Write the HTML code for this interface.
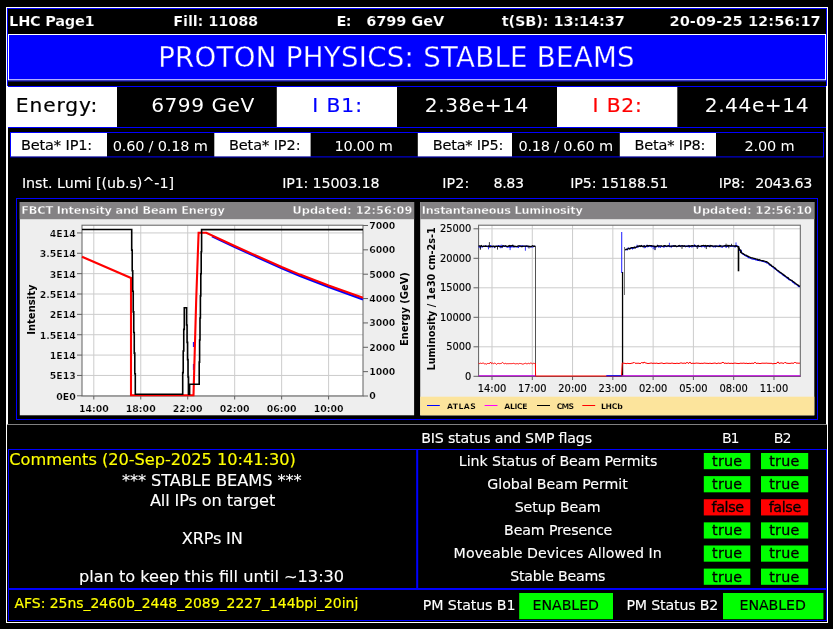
<!DOCTYPE html>
<html><head><meta charset="utf-8"><title>LHC Page1</title>
<style>
html,body{margin:0;padding:0;background:#000;overflow:hidden}
svg{display:block;will-change:transform;font-family:"DejaVu Sans","Liberation Sans",sans-serif}
</style></head><body>
<svg width="833" height="629" viewBox="0 0 833 629">
<rect width="833" height="629" fill="#000"/>
<rect x="6.00" y="7.00" width="1.00" height="616.00" fill="#fff" />
<rect x="827.00" y="7.00" width="1.00" height="616.00" fill="#fff" />
<rect x="6.00" y="7.00" width="822.00" height="1.00" fill="#fff" />
<rect x="6.00" y="622.00" width="822.00" height="1.00" fill="#fff" />
<rect x="7.00" y="8.00" width="820.00" height="1.00" fill="#0000ff" />
<rect x="7.00" y="8.00" width="1.00" height="78.00" fill="#0000ff" />
<rect x="826.00" y="8.00" width="1.00" height="78.00" fill="#0000ff" />
<rect x="7.00" y="86.00" width="1.00" height="338.60" fill="#fff" />
<rect x="826.00" y="86.00" width="1.00" height="338.60" fill="#fff" />
<text x="9.11" y="26.00" font-size="14.6" fill="#fff" textLength="85.67" lengthAdjust="spacing" font-weight="bold" stroke="#000" stroke-width="0.2" >LHC Page1</text>
<text x="173.30" y="26.00" font-size="14.6" fill="#fff" textLength="84.98" lengthAdjust="spacing" font-weight="bold" stroke="#000" stroke-width="0.2" >Fill: 11088</text>
<text x="336.53" y="26.00" font-size="14.6" fill="#fff" textLength="15.12" lengthAdjust="spacing" font-weight="bold" stroke="#000" stroke-width="0.2" >E:</text>
<text x="366.20" y="26.00" font-size="14.6" fill="#fff" textLength="78.07" lengthAdjust="spacing" font-weight="bold" stroke="#000" stroke-width="0.2" >6799 GeV</text>
<text x="501.71" y="26.00" font-size="14.6" fill="#fff" textLength="123.12" lengthAdjust="spacing" font-weight="bold" stroke="#000" stroke-width="0.2" >t(SB): 13:14:37</text>
<text x="669.44" y="26.00" font-size="14.6" fill="#fff" textLength="151.31" lengthAdjust="spacing" font-weight="bold" stroke="#000" stroke-width="0.2" >20-09-25 12:56:17</text>
<rect x="8.00" y="34.00" width="818.00" height="46.40" fill="#fff" />
<rect x="9.00" y="35.00" width="816.00" height="44.30" fill="#0000ff" />
<rect x="8.00" y="80.40" width="818.00" height="1.00" fill="#2020ff" />
<text x="158.15" y="66.60" font-size="27.6" fill="#fff" textLength="476.48" lengthAdjust="spacing" stroke="#0000ff" stroke-width="0.3" >PROTON PHYSICS: STABLE BEAMS</text>
<rect x="8.00" y="86.00" width="818.00" height="1.00" fill="#0000ff" />
<rect x="8.00" y="127.00" width="818.00" height="1.00" fill="#0000ff" />
<rect x="8.00" y="87.00" width="109.00" height="40.00" fill="#fff" />
<rect x="276.80" y="87.00" width="120.20" height="40.00" fill="#fff" />
<rect x="557.00" y="87.00" width="120.30" height="40.00" fill="#fff" />
<text x="15.78" y="111.90" font-size="20.2" fill="#000" textLength="81.54" lengthAdjust="spacing" stroke="#000" stroke-width="0.2" >Energy:</text>
<text x="151.16" y="111.90" font-size="20.2" fill="#fff" textLength="103.11" lengthAdjust="spacing" >6799 GeV</text>
<text x="312.26" y="111.90" font-size="20.2" fill="#0000ff" textLength="49.68" lengthAdjust="spacing" stroke="#0000ff" stroke-width="0.2" >I B1:</text>
<text x="424.87" y="111.90" font-size="20.2" fill="#fff" textLength="103.48" lengthAdjust="spacing" >2.38e+14</text>
<text x="592.47" y="111.90" font-size="20.2" fill="#ff0000" textLength="49.46" lengthAdjust="spacing" stroke="#ff0000" stroke-width="0.2" >I B2:</text>
<text x="704.77" y="111.90" font-size="20.2" fill="#fff" textLength="103.79" lengthAdjust="spacing" >2.44e+14</text>
<rect x="10.5" y="132.5" width="813" height="24.4" fill="none" stroke="#0000ff" stroke-width="1"/>
<rect x="11.00" y="133.00" width="96.00" height="23.40" fill="#fff" />
<rect x="214.30" y="133.00" width="96.30" height="23.40" fill="#fff" />
<rect x="417.80" y="133.00" width="94.20" height="23.40" fill="#fff" />
<rect x="619.80" y="133.00" width="96.20" height="23.40" fill="#fff" />
<text x="20.90" y="150.00" font-size="14.5" fill="#000" textLength="71.36" lengthAdjust="spacing" stroke="#000" stroke-width="0.15" >Beta* IP1:</text>
<text x="228.89" y="150.00" font-size="14.5" fill="#000" textLength="71.67" lengthAdjust="spacing" stroke="#000" stroke-width="0.15" >Beta* IP2:</text>
<text x="432.71" y="150.00" font-size="14.5" fill="#000" textLength="70.63" lengthAdjust="spacing" stroke="#000" stroke-width="0.15" >Beta* IP5:</text>
<text x="634.41" y="150.00" font-size="14.5" fill="#000" textLength="71.05" lengthAdjust="spacing" stroke="#000" stroke-width="0.15" >Beta* IP8:</text>
<text x="334.57" y="151.00" font-size="14.5" fill="#fff" textLength="58.20" lengthAdjust="spacing" >10.00 m</text>
<text x="744.56" y="151.00" font-size="14.5" fill="#fff" textLength="50.04" lengthAdjust="spacing" >2.00 m</text>
<text x="112.68" y="151.00" font-size="14.5" fill="#fff" textLength="95.11" lengthAdjust="spacing" >0.60 / 0.18 m</text>
<text x="518.48" y="151.00" font-size="14.5" fill="#fff" textLength="94.60" lengthAdjust="spacing" >0.18 / 0.60 m</text>
<text x="21.91" y="187.70" font-size="14.25" fill="#fff" textLength="152.09" lengthAdjust="spacing" stroke="#fff" stroke-width="0.12" >Inst. Lumi [(ub.s)^-1]</text>
<text x="282.23" y="187.70" font-size="14.25" fill="#fff" textLength="97.23" lengthAdjust="spacing" stroke="#fff" stroke-width="0.12" >IP1: 15003.18</text>
<text x="442.17" y="187.70" font-size="14.25" fill="#fff" textLength="27.21" lengthAdjust="spacing" stroke="#fff" stroke-width="0.12" >IP2:</text>
<text x="493.48" y="187.70" font-size="14.25" fill="#fff" textLength="30.62" lengthAdjust="spacing" stroke="#fff" stroke-width="0.12" >8.83</text>
<text x="570.22" y="187.70" font-size="14.25" fill="#fff" textLength="98.19" lengthAdjust="spacing" stroke="#fff" stroke-width="0.12" >IP5: 15188.51</text>
<text x="718.83" y="187.70" font-size="14.25" fill="#fff" textLength="26.20" lengthAdjust="spacing" stroke="#fff" stroke-width="0.12" >IP8:</text>
<text x="755.19" y="187.70" font-size="14.25" fill="#fff" textLength="57.21" lengthAdjust="spacing" stroke="#fff" stroke-width="0.12" >2043.63</text>
<rect x="8.00" y="449.00" width="1.00" height="172.00" fill="#0000ff" />
<rect x="826.00" y="449.00" width="1.00" height="172.00" fill="#0000ff" />
<rect x="16.5" y="198.5" width="801" height="221" fill="none" stroke="#0000ff" stroke-width="1"/>
<rect x="19.80" y="202.00" width="394.30" height="213.30" fill="#eeeeee" />
<rect x="19.80" y="202.00" width="394.30" height="17.20" fill="#848284" />
<text x="21.30" y="214.00" font-size="11.3" fill="#fff" textLength="203.50" lengthAdjust="spacing" font-weight="bold" stroke="#848284" stroke-width="0.35" >FBCT Intensity and Beam Energy</text>
<text x="292.56" y="214.00" font-size="11.3" fill="#fff" textLength="119.77" lengthAdjust="spacing" font-weight="bold" stroke="#848284" stroke-width="0.35" >Updated: 12:56:09</text>
<rect x="420.20" y="202.00" width="394.10" height="213.30" fill="#eeeeee" />
<rect x="420.20" y="202.00" width="394.10" height="17.20" fill="#848284" />
<text x="421.70" y="214.00" font-size="11.3" fill="#fff" textLength="161.20" lengthAdjust="spacing" font-weight="bold" stroke="#848284" stroke-width="0.35" >Instantaneous Luminosity</text>
<text x="692.77" y="214.00" font-size="11.3" fill="#fff" textLength="119.18" lengthAdjust="spacing" font-weight="bold" stroke="#848284" stroke-width="0.35" >Updated: 12:56:10</text>
<rect x="82.00" y="225.20" width="281.00" height="170.80" fill="#fff" />
<rect x="82.00" y="395.30" width="281.00" height="1.00" fill="#cccccc" />
<rect x="77.00" y="395.30" width="5.00" height="1.00" fill="#606060" />
<text x="75.70" y="399.80" font-size="9.4" fill="#000" text-anchor="end" font-weight="bold" stroke="#eeeeee" stroke-width="0.22" >0E0</text>
<rect x="82.00" y="374.94" width="281.00" height="1.00" fill="#cccccc" />
<rect x="77.00" y="374.94" width="5.00" height="1.00" fill="#606060" />
<text x="75.70" y="379.44" font-size="9.4" fill="#000" text-anchor="end" font-weight="bold" stroke="#eeeeee" stroke-width="0.22" >5E13</text>
<rect x="82.00" y="354.58" width="281.00" height="1.00" fill="#cccccc" />
<rect x="77.00" y="354.58" width="5.00" height="1.00" fill="#606060" />
<text x="75.70" y="359.08" font-size="9.4" fill="#000" text-anchor="end" font-weight="bold" stroke="#eeeeee" stroke-width="0.22" >1E14</text>
<rect x="82.00" y="334.22" width="281.00" height="1.00" fill="#cccccc" />
<rect x="77.00" y="334.22" width="5.00" height="1.00" fill="#606060" />
<text x="75.70" y="338.72" font-size="9.4" fill="#000" text-anchor="end" font-weight="bold" stroke="#eeeeee" stroke-width="0.22" >1.5E14</text>
<rect x="82.00" y="313.86" width="281.00" height="1.00" fill="#cccccc" />
<rect x="77.00" y="313.86" width="5.00" height="1.00" fill="#606060" />
<text x="75.70" y="318.36" font-size="9.4" fill="#000" text-anchor="end" font-weight="bold" stroke="#eeeeee" stroke-width="0.22" >2E14</text>
<rect x="82.00" y="293.50" width="281.00" height="1.00" fill="#cccccc" />
<rect x="77.00" y="293.50" width="5.00" height="1.00" fill="#606060" />
<text x="75.70" y="298.00" font-size="9.4" fill="#000" text-anchor="end" font-weight="bold" stroke="#eeeeee" stroke-width="0.22" >2.5E14</text>
<rect x="82.00" y="273.14" width="281.00" height="1.00" fill="#cccccc" />
<rect x="77.00" y="273.14" width="5.00" height="1.00" fill="#606060" />
<text x="75.70" y="277.64" font-size="9.4" fill="#000" text-anchor="end" font-weight="bold" stroke="#eeeeee" stroke-width="0.22" >3E14</text>
<rect x="82.00" y="252.78" width="281.00" height="1.00" fill="#cccccc" />
<rect x="77.00" y="252.78" width="5.00" height="1.00" fill="#606060" />
<text x="75.70" y="257.28" font-size="9.4" fill="#000" text-anchor="end" font-weight="bold" stroke="#eeeeee" stroke-width="0.22" >3.5E14</text>
<rect x="82.00" y="232.42" width="281.00" height="1.00" fill="#cccccc" />
<rect x="77.00" y="232.42" width="5.00" height="1.00" fill="#606060" />
<text x="75.70" y="236.92" font-size="9.4" fill="#000" text-anchor="end" font-weight="bold" stroke="#eeeeee" stroke-width="0.22" >4E14</text>
<rect x="93.30" y="225.20" width="1.00" height="170.80" fill="#cccccc" />
<rect x="93.30" y="396.00" width="1.00" height="3.50" fill="#606060" />
<text x="93.80" y="411.90" font-size="9.4" fill="#000" text-anchor="middle" font-weight="bold" stroke="#eeeeee" stroke-width="0.22" >14:00</text>
<rect x="140.26" y="225.20" width="1.00" height="170.80" fill="#cccccc" />
<rect x="140.26" y="396.00" width="1.00" height="3.50" fill="#606060" />
<text x="140.76" y="411.90" font-size="9.4" fill="#000" text-anchor="middle" font-weight="bold" stroke="#eeeeee" stroke-width="0.22" >18:00</text>
<rect x="187.22" y="225.20" width="1.00" height="170.80" fill="#cccccc" />
<rect x="187.22" y="396.00" width="1.00" height="3.50" fill="#606060" />
<text x="187.72" y="411.90" font-size="9.4" fill="#000" text-anchor="middle" font-weight="bold" stroke="#eeeeee" stroke-width="0.22" >22:00</text>
<rect x="234.18" y="225.20" width="1.00" height="170.80" fill="#cccccc" />
<rect x="234.18" y="396.00" width="1.00" height="3.50" fill="#606060" />
<text x="234.68" y="411.90" font-size="9.4" fill="#000" text-anchor="middle" font-weight="bold" stroke="#eeeeee" stroke-width="0.22" >02:00</text>
<rect x="281.14" y="225.20" width="1.00" height="170.80" fill="#cccccc" />
<rect x="281.14" y="396.00" width="1.00" height="3.50" fill="#606060" />
<text x="281.64" y="411.90" font-size="9.4" fill="#000" text-anchor="middle" font-weight="bold" stroke="#eeeeee" stroke-width="0.22" >06:00</text>
<rect x="328.10" y="225.20" width="1.00" height="170.80" fill="#cccccc" />
<rect x="328.10" y="396.00" width="1.00" height="3.50" fill="#606060" />
<text x="328.60" y="411.90" font-size="9.4" fill="#000" text-anchor="middle" font-weight="bold" stroke="#eeeeee" stroke-width="0.22" >10:00</text>
<rect x="363.00" y="395.50" width="5.00" height="1.00" fill="#606060" />
<text x="369.30" y="399.40" font-size="9.4" fill="#000" text-anchor="start" font-weight="bold" stroke="#eeeeee" stroke-width="0.22" >0</text>
<rect x="363.00" y="371.14" width="5.00" height="1.00" fill="#606060" />
<text x="369.30" y="375.04" font-size="9.4" fill="#000" text-anchor="start" font-weight="bold" stroke="#eeeeee" stroke-width="0.22" >1000</text>
<rect x="363.00" y="346.78" width="5.00" height="1.00" fill="#606060" />
<text x="369.30" y="350.68" font-size="9.4" fill="#000" text-anchor="start" font-weight="bold" stroke="#eeeeee" stroke-width="0.22" >2000</text>
<rect x="363.00" y="322.42" width="5.00" height="1.00" fill="#606060" />
<text x="369.30" y="326.32" font-size="9.4" fill="#000" text-anchor="start" font-weight="bold" stroke="#eeeeee" stroke-width="0.22" >3000</text>
<rect x="363.00" y="298.06" width="5.00" height="1.00" fill="#606060" />
<text x="369.30" y="301.96" font-size="9.4" fill="#000" text-anchor="start" font-weight="bold" stroke="#eeeeee" stroke-width="0.22" >4000</text>
<rect x="363.00" y="273.70" width="5.00" height="1.00" fill="#606060" />
<text x="369.30" y="277.60" font-size="9.4" fill="#000" text-anchor="start" font-weight="bold" stroke="#eeeeee" stroke-width="0.22" >5000</text>
<rect x="363.00" y="249.34" width="5.00" height="1.00" fill="#606060" />
<text x="369.30" y="253.24" font-size="9.4" fill="#000" text-anchor="start" font-weight="bold" stroke="#eeeeee" stroke-width="0.22" >6000</text>
<rect x="363.00" y="224.98" width="5.00" height="1.00" fill="#606060" />
<text x="369.30" y="228.88" font-size="9.4" fill="#000" text-anchor="start" font-weight="bold" stroke="#eeeeee" stroke-width="0.22" >7000</text>
<rect x="82" y="225.2" width="281" height="170.8" fill="none" stroke="#606060" stroke-width="1"/>
<text x="-25.56" y="0" font-size="9.9" fill="#000" textLength="50.39" lengthAdjust="spacingAndGlyphs" font-weight="bold" transform="translate(34.60,309.30) rotate(-90)">Intensity</text>
<text x="-37.00" y="0" font-size="9.9" fill="#000" textLength="73.94" lengthAdjust="spacingAndGlyphs" font-weight="bold" transform="translate(408.20,309.10) rotate(-90)">Energy (GeV)</text>
<polyline points="212.00,236.20 234.20,246.78 281.70,268.28 300.00,276.00 328.60,287.08 363.00,299.50" fill="none" stroke="#0000ff" stroke-width="2.2" />
<rect x="192.90" y="342.00" width="1.00" height="5.00" fill="#0000ff" />
<rect x="192.90" y="364.00" width="1.00" height="6.00" fill="#0000ff" />
<polyline points="82.00,256.70 131.00,278.00 131.00,395.30 193.50,395.30 196.20,300.00 198.60,232.70 206.30,232.70 234.20,245.80 281.70,267.00 300.00,274.60 328.60,285.50 363.00,297.70" fill="none" stroke="#ff0000" stroke-width="2.1" />
<polyline points="82.00,229.50 131.70,229.50 131.70,229.50 131.70,250.10 132.21,250.10 132.21,270.70 132.72,270.70 132.72,291.30 133.24,291.30 133.24,311.90 133.75,311.90 133.75,332.50 134.26,332.50 134.26,353.10 134.78,353.10 134.78,373.70 135.29,373.70 135.29,394.30 135.80,394.30 182.70,394.30 182.70,394.30 182.70,372.65 183.22,372.65 183.22,351.00 183.75,351.00 183.75,329.35 184.28,329.35 184.28,307.70 184.80,307.70 186.60,307.70 186.60,307.70 186.60,325.02 187.08,325.02 187.08,342.34 187.56,342.34 187.56,359.66 188.04,359.66 188.04,376.98 188.52,376.98 188.52,394.30 189.00,394.30 189.60,394.30 189.60,384.20 199.20,384.20 199.20,384.20 199.20,362.11 199.60,362.11 199.60,340.03 200.00,340.03 200.00,317.94 200.40,317.94 200.40,295.86 200.80,295.86 200.80,273.77 201.20,273.77 201.20,251.69 201.60,251.69 201.60,229.60 202.00,229.60 363.00,229.60" fill="none" stroke="#000" stroke-width="1.6" stroke-linejoin="miter"/>
<rect x="478.60" y="225.20" width="321.70" height="151.30" fill="#fff" />
<rect x="478.60" y="375.80" width="321.70" height="1.00" fill="#cccccc" />
<rect x="473.50" y="375.80" width="5.10" height="1.00" fill="#606060" />
<text x="471.40" y="379.90" font-size="9.9" fill="#000" text-anchor="end" stroke="#000" stroke-width="0.15" >0</text>
<rect x="478.60" y="346.30" width="321.70" height="1.00" fill="#cccccc" />
<rect x="473.50" y="346.30" width="5.10" height="1.00" fill="#606060" />
<text x="471.40" y="350.40" font-size="9.9" fill="#000" text-anchor="end" stroke="#000" stroke-width="0.15" >5000</text>
<rect x="478.60" y="316.80" width="321.70" height="1.00" fill="#cccccc" />
<rect x="473.50" y="316.80" width="5.10" height="1.00" fill="#606060" />
<text x="471.40" y="320.90" font-size="9.9" fill="#000" text-anchor="end" stroke="#000" stroke-width="0.15" >10000</text>
<rect x="478.60" y="287.30" width="321.70" height="1.00" fill="#cccccc" />
<rect x="473.50" y="287.30" width="5.10" height="1.00" fill="#606060" />
<text x="471.40" y="291.40" font-size="9.9" fill="#000" text-anchor="end" stroke="#000" stroke-width="0.15" >15000</text>
<rect x="478.60" y="257.80" width="321.70" height="1.00" fill="#cccccc" />
<rect x="473.50" y="257.80" width="5.10" height="1.00" fill="#606060" />
<text x="471.40" y="261.90" font-size="9.9" fill="#000" text-anchor="end" stroke="#000" stroke-width="0.15" >20000</text>
<rect x="478.60" y="228.30" width="321.70" height="1.00" fill="#cccccc" />
<rect x="473.50" y="228.30" width="5.10" height="1.00" fill="#606060" />
<text x="471.40" y="232.40" font-size="9.9" fill="#000" text-anchor="end" stroke="#000" stroke-width="0.15" >25000</text>
<rect x="491.50" y="225.20" width="1.00" height="151.30" fill="#cccccc" />
<rect x="491.50" y="376.50" width="1.00" height="3.50" fill="#606060" />
<text x="492.00" y="392.00" font-size="9.9" fill="#000" text-anchor="middle" stroke="#000" stroke-width="0.15" >14:00</text>
<rect x="531.78" y="225.20" width="1.00" height="151.30" fill="#cccccc" />
<rect x="531.78" y="376.50" width="1.00" height="3.50" fill="#606060" />
<text x="532.28" y="392.00" font-size="9.9" fill="#000" text-anchor="middle" stroke="#000" stroke-width="0.15" >17:00</text>
<rect x="572.06" y="225.20" width="1.00" height="151.30" fill="#cccccc" />
<rect x="572.06" y="376.50" width="1.00" height="3.50" fill="#606060" />
<text x="572.56" y="392.00" font-size="9.9" fill="#000" text-anchor="middle" stroke="#000" stroke-width="0.15" >20:00</text>
<rect x="612.34" y="225.20" width="1.00" height="151.30" fill="#cccccc" />
<rect x="612.34" y="376.50" width="1.00" height="3.50" fill="#606060" />
<text x="612.84" y="392.00" font-size="9.9" fill="#000" text-anchor="middle" stroke="#000" stroke-width="0.15" >23:00</text>
<rect x="652.62" y="225.20" width="1.00" height="151.30" fill="#cccccc" />
<rect x="652.62" y="376.50" width="1.00" height="3.50" fill="#606060" />
<text x="653.12" y="392.00" font-size="9.9" fill="#000" text-anchor="middle" stroke="#000" stroke-width="0.15" >02:00</text>
<rect x="692.90" y="225.20" width="1.00" height="151.30" fill="#cccccc" />
<rect x="692.90" y="376.50" width="1.00" height="3.50" fill="#606060" />
<text x="693.40" y="392.00" font-size="9.9" fill="#000" text-anchor="middle" stroke="#000" stroke-width="0.15" >05:00</text>
<rect x="733.18" y="225.20" width="1.00" height="151.30" fill="#cccccc" />
<rect x="733.18" y="376.50" width="1.00" height="3.50" fill="#606060" />
<text x="733.68" y="392.00" font-size="9.9" fill="#000" text-anchor="middle" stroke="#000" stroke-width="0.15" >08:00</text>
<rect x="773.46" y="225.20" width="1.00" height="151.30" fill="#cccccc" />
<rect x="773.46" y="376.50" width="1.00" height="3.50" fill="#606060" />
<text x="773.96" y="392.00" font-size="9.9" fill="#000" text-anchor="middle" stroke="#000" stroke-width="0.15" >11:00</text>
<rect x="478.6" y="225.2" width="321.69999999999993" height="151.3" fill="none" stroke="#606060" stroke-width="1"/>
<text x="-71.68" y="0" font-size="9.7" fill="#000" textLength="143.14" lengthAdjust="spacingAndGlyphs" font-weight="bold" transform="translate(435.20,298.80) rotate(-90)">Luminosity / 1e30 cm-2s-1</text>
<rect x="420.20" y="396.70" width="394.10" height="18.60" fill="#fce49c" />
<rect x="427.00" y="405.00" width="12.80" height="1.00" fill="#0000ff" />
<text x="447.07" y="408.80" font-size="7.7" fill="#000" textLength="28.73" lengthAdjust="spacing" font-weight="bold" stroke="#fce49c" stroke-width="0.12" >ATLAS</text>
<rect x="484.60" y="405.00" width="12.90" height="1.00" fill="#ff00ff" />
<text x="504.37" y="408.80" font-size="7.7" fill="#000" textLength="23.26" lengthAdjust="spacing" font-weight="bold" stroke="#fce49c" stroke-width="0.12" >ALICE</text>
<rect x="537.00" y="405.00" width="13.00" height="1.00" fill="#000" />
<text x="556.65" y="408.80" font-size="7.7" fill="#000" textLength="17.47" lengthAdjust="spacing" font-weight="bold" stroke="#fce49c" stroke-width="0.12" >CMS</text>
<rect x="582.30" y="405.00" width="12.90" height="1.00" fill="#ff0000" />
<text x="600.92" y="408.80" font-size="7.7" fill="#000" textLength="21.81" lengthAdjust="spacing" font-weight="bold" stroke="#fce49c" stroke-width="0.12" >LHCb</text>
<polyline points="478.60,246.59 479.50,247.11 480.40,246.43 481.30,246.43 482.20,247.06 483.10,246.54 484.00,246.38 484.90,246.35 485.80,245.82 486.70,246.44 487.60,246.58 488.50,245.95 489.40,246.37 490.30,245.64 491.20,245.91 492.10,247.05 493.00,246.70 493.90,246.41 494.80,247.02 495.70,246.45 496.60,246.11 497.50,246.53 498.40,245.71 499.30,246.06 500.20,247.41 501.10,245.47 502.00,247.30 502.90,245.66 503.80,246.48 504.70,246.25 505.60,246.51 506.50,246.71 507.40,247.24 508.30,246.98 509.20,246.34 510.10,247.29 511.00,246.12 511.90,246.97 512.80,246.49 513.70,246.87 514.60,246.84 515.50,246.61 516.40,246.62 517.30,246.66 518.20,247.48 519.10,246.30 520.00,245.91 520.90,246.47 521.80,245.77 522.70,245.82 523.60,246.49 524.50,246.22 525.40,245.99 526.30,246.47 527.20,246.12 528.10,246.97 529.00,246.34 529.90,246.91 530.80,246.46 531.70,247.06 532.60,246.98 533.50,246.61 534.40,246.32 535.30,246.38" fill="none" stroke="#0000ff" stroke-width="1.1" />
<polyline points="625.30,250.07 626.20,249.37 627.10,249.91 628.00,248.12 628.90,248.36 629.80,248.80 630.70,248.30 631.60,247.78 632.50,248.79 633.40,247.72 634.30,247.90 635.20,247.46 636.10,246.96 637.00,246.92 637.90,247.16 638.80,246.13 639.70,246.51 640.60,246.18 641.50,245.87 642.40,246.61 643.30,246.10 644.20,246.07 645.10,247.43 646.00,246.38 646.90,245.34 647.80,246.79 648.70,246.33 649.60,245.49 650.50,246.25 651.40,246.75 652.30,246.04 653.20,246.15 654.10,246.65 655.00,247.23 655.90,246.53 656.80,246.69 657.70,245.44 658.60,246.90 659.50,246.34 660.40,247.24 661.30,246.17 662.20,246.59 663.10,246.73 664.00,247.05 664.90,246.37 665.80,246.30 666.70,246.69 667.60,246.46 668.50,245.90 669.40,246.59 670.30,246.49 671.20,246.39 672.10,245.96 673.00,246.34 673.90,245.99 674.80,245.87 675.70,246.24 676.60,246.55 677.50,246.22 678.40,246.48 679.30,245.73 680.20,245.87 681.10,246.01 682.00,246.02 682.90,246.21 683.80,245.90 684.70,246.37 685.60,246.91 686.50,245.93 687.40,246.57 688.30,245.67 689.20,247.03 690.10,246.13 691.00,246.40 691.90,246.96 692.80,245.83 693.70,246.16 694.60,246.27 695.50,245.93 696.40,246.70 697.30,245.76 698.20,246.94 699.10,246.57 700.00,246.39 700.90,246.27 701.80,246.72 702.70,245.84 703.60,246.14 704.50,246.81 705.40,246.69 706.30,246.43 707.20,246.51 708.10,245.68 709.00,246.55 709.90,245.49 710.80,245.73 711.70,246.12 712.60,246.58 713.50,246.81 714.40,246.25 715.30,246.96 716.20,246.04 717.10,246.55 718.00,246.18 718.90,246.00 719.80,245.30 720.70,246.84 721.60,246.92 722.50,247.16 723.40,246.00 724.30,245.93 725.20,245.57 726.10,247.29 727.00,246.25 727.90,246.45 728.80,246.07 729.70,245.46 730.60,246.45 731.50,246.26 732.40,246.06 733.30,246.29 734.20,246.26 735.10,247.09 736.00,246.10 736.90,245.88 737.80,246.04 738.70,248.08 739.60,250.48 740.50,250.48 741.40,251.93 742.30,253.92 743.20,254.32 744.10,254.84 745.00,255.59 745.90,256.07 746.80,256.36 747.70,256.91 748.60,257.61 749.50,257.69 750.40,258.15 751.30,258.78 752.20,258.98 753.10,259.12 754.00,259.08 754.90,259.31 755.80,259.98 756.70,259.86 757.60,260.52 758.50,260.29 759.40,260.61 760.30,260.82 761.20,260.80 762.10,261.18 763.00,261.37 763.90,261.80 764.80,262.02 765.70,262.18 766.60,262.92 767.50,262.86 768.40,263.52 769.30,264.76 770.20,265.30 771.10,265.85 772.00,266.36 772.90,267.33 773.80,267.95 774.70,268.74 775.60,269.22 776.50,269.77 777.40,270.75 778.30,271.70 779.20,272.40 780.10,273.06 781.00,273.33 781.90,274.01 782.80,275.16 783.70,275.51 784.60,276.19 785.50,276.61 786.40,277.49 787.30,278.20 788.20,278.77 789.10,279.68 790.00,280.04 790.90,280.34 791.80,280.94 792.70,282.21 793.60,282.48 794.50,283.71 795.40,283.98 796.30,284.37 797.20,285.22 798.10,286.16 799.00,286.60 799.90,286.66" fill="none" stroke="#0000ff" stroke-width="1.1" />
<line x1="480.40" y1="246.55" x2="480.40" y2="248.75" stroke="#0000ff" stroke-width="0.8"/>
<line x1="488.50" y1="246.55" x2="488.50" y2="249.33" stroke="#0000ff" stroke-width="0.8"/>
<line x1="510.10" y1="246.55" x2="510.10" y2="250.11" stroke="#0000ff" stroke-width="0.8"/>
<line x1="512.80" y1="246.55" x2="512.80" y2="244.84" stroke="#0000ff" stroke-width="0.8"/>
<line x1="525.40" y1="246.55" x2="525.40" y2="250.72" stroke="#0000ff" stroke-width="0.8"/>
<line x1="637.00" y1="247.07" x2="637.00" y2="244.72" stroke="#0000ff" stroke-width="0.8"/>
<line x1="644.20" y1="246.35" x2="644.20" y2="248.27" stroke="#0000ff" stroke-width="0.8"/>
<line x1="653.20" y1="246.35" x2="653.20" y2="249.23" stroke="#0000ff" stroke-width="0.8"/>
<line x1="655.00" y1="246.35" x2="655.00" y2="249.86" stroke="#0000ff" stroke-width="0.8"/>
<line x1="669.40" y1="246.35" x2="669.40" y2="242.76" stroke="#0000ff" stroke-width="0.8"/>
<line x1="671.20" y1="246.35" x2="671.20" y2="248.08" stroke="#0000ff" stroke-width="0.8"/>
<line x1="694.60" y1="246.35" x2="694.60" y2="244.21" stroke="#0000ff" stroke-width="0.8"/>
<line x1="736.00" y1="246.35" x2="736.00" y2="242.44" stroke="#0000ff" stroke-width="0.8"/>
<line x1="740.50" y1="250.96" x2="740.50" y2="252.92" stroke="#0000ff" stroke-width="0.8"/>
<line x1="741.40" y1="252.40" x2="741.40" y2="249.75" stroke="#0000ff" stroke-width="0.8"/>
<polyline points="478.60,245.85 479.50,245.86 480.40,246.16 481.30,245.52 482.20,246.37 483.10,246.26 484.00,246.10 484.90,246.29 485.80,246.04 486.70,246.30 487.60,246.21 488.50,246.08 489.40,246.74 490.30,246.79 491.20,246.33 492.10,246.43 493.00,246.07 493.90,246.07 494.80,246.49 495.70,246.14 496.60,246.43 497.50,246.30 498.40,246.46 499.30,246.31 500.20,246.34 501.10,246.51 502.00,246.88 502.90,245.93 503.80,245.90 504.70,246.11 505.60,245.75 506.50,246.34 507.40,246.37 508.30,246.35 509.20,245.57 510.10,246.15 511.00,245.76 511.90,245.92 512.80,245.44 513.70,246.54 514.60,246.09 515.50,246.33 516.40,246.58 517.30,246.45 518.20,245.86 519.10,245.86 520.00,246.18 520.90,246.08 521.80,246.68 522.70,246.30 523.60,246.10 524.50,246.06 525.40,246.29 526.30,245.94 527.20,246.05 528.10,246.14 529.00,246.34 529.90,246.45 530.80,246.79 531.70,246.20 532.60,245.72 533.50,246.24 534.40,246.06 535.30,246.30" fill="none" stroke="#000" stroke-width="1.3" />
<polyline points="625.30,249.94 626.20,249.21 627.10,249.30 628.00,249.01 628.90,248.32 629.80,248.85 630.70,247.97 631.60,247.58 632.50,247.73 633.40,247.92 634.30,247.17 635.20,247.85 636.10,247.31 637.00,246.75 637.90,245.97 638.80,246.42 639.70,245.82 640.60,246.35 641.50,245.66 642.40,246.47 643.30,246.74 644.20,245.89 645.10,246.29 646.00,246.49 646.90,245.83 647.80,245.55 648.70,246.08 649.60,245.61 650.50,245.63 651.40,245.64 652.30,246.17 653.20,246.03 654.10,246.09 655.00,246.45 655.90,246.32 656.80,246.55 657.70,245.62 658.60,246.04 659.50,245.94 660.40,245.90 661.30,245.80 662.20,246.20 663.10,246.31 664.00,245.66 664.90,245.76 665.80,245.92 666.70,246.24 667.60,245.92 668.50,245.67 669.40,246.21 670.30,246.16 671.20,246.25 672.10,246.09 673.00,246.10 673.90,245.80 674.80,246.18 675.70,245.72 676.60,246.55 677.50,246.35 678.40,245.95 679.30,245.56 680.20,246.39 681.10,245.99 682.00,245.75 682.90,245.92 683.80,246.33 684.70,245.77 685.60,246.09 686.50,246.37 687.40,246.03 688.30,246.04 689.20,245.78 690.10,246.25 691.00,245.98 691.90,245.75 692.80,245.68 693.70,246.02 694.60,245.75 695.50,245.89 696.40,246.35 697.30,245.99 698.20,245.60 699.10,246.36 700.00,246.29 700.90,246.14 701.80,245.62 702.70,245.65 703.60,245.52 704.50,245.80 705.40,245.56 706.30,246.01 707.20,245.75 708.10,245.74 709.00,246.04 709.90,246.62 710.80,245.48 711.70,245.91 712.60,245.98 713.50,246.09 714.40,246.06 715.30,245.90 716.20,246.05 717.10,246.11 718.00,246.11 718.90,246.49 719.80,246.41 720.70,245.82 721.60,246.07 722.50,246.19 723.40,246.09 724.30,245.99 725.20,245.76 726.10,245.66 727.00,246.25 727.90,245.29 728.80,246.05 729.70,245.59 730.60,245.81 731.50,245.80 732.40,245.93 733.30,245.84 734.20,245.98 735.10,245.98 736.00,245.81 736.90,246.38 737.80,246.55 738.70,247.57 739.60,249.06 740.50,250.38 741.40,252.52 742.30,253.31 743.20,253.59 744.10,254.41 745.00,254.78 745.90,255.05 746.80,255.44 747.70,256.28 748.60,256.45 749.50,257.01 750.40,257.27 751.30,257.79 752.20,257.87 753.10,258.17 754.00,258.49 754.90,258.68 755.80,258.98 756.70,259.06 757.60,259.26 758.50,259.93 759.40,259.73 760.30,260.19 761.20,260.56 762.10,260.72 763.00,260.73 763.90,261.20 764.80,261.12 765.70,261.70 766.60,261.75 767.50,262.27 768.40,262.96 769.30,263.81 770.20,264.60 771.10,265.12 772.00,266.28 772.90,266.32 773.80,267.13 774.70,267.88 775.60,268.44 776.50,269.81 777.40,270.28 778.30,270.84 779.20,271.60 780.10,272.21 781.00,272.80 781.90,273.52 782.80,274.12 783.70,274.94 784.60,275.32 785.50,276.15 786.40,277.04 787.30,277.33 788.20,277.86 789.10,278.97 790.00,279.43 790.90,280.25 791.80,280.37 792.70,281.21 793.60,281.84 794.50,282.57 795.40,283.14 796.30,284.06 797.20,284.60 798.10,285.03 799.00,285.89 799.90,286.43" fill="none" stroke="#000" stroke-width="1.3" />
<line x1="480.40" y1="246.20" x2="480.40" y2="249.80" stroke="#000" stroke-width="0.8"/>
<line x1="489.40" y1="246.20" x2="489.40" y2="242.11" stroke="#000" stroke-width="0.8"/>
<line x1="494.80" y1="246.20" x2="494.80" y2="248.15" stroke="#000" stroke-width="0.8"/>
<line x1="497.50" y1="246.20" x2="497.50" y2="249.61" stroke="#000" stroke-width="0.8"/>
<line x1="529.00" y1="246.20" x2="529.00" y2="248.50" stroke="#000" stroke-width="0.8"/>
<line x1="655.00" y1="246.00" x2="655.00" y2="250.15" stroke="#000" stroke-width="0.8"/>
<line x1="682.00" y1="246.00" x2="682.00" y2="248.83" stroke="#000" stroke-width="0.8"/>
<line x1="697.30" y1="246.00" x2="697.30" y2="248.99" stroke="#000" stroke-width="0.8"/>
<line x1="706.30" y1="246.00" x2="706.30" y2="249.07" stroke="#000" stroke-width="0.8"/>
<line x1="726.10" y1="246.00" x2="726.10" y2="243.65" stroke="#000" stroke-width="0.8"/>
<line x1="728.80" y1="246.00" x2="728.80" y2="248.30" stroke="#000" stroke-width="0.8"/>
<line x1="731.50" y1="246.00" x2="731.50" y2="243.81" stroke="#000" stroke-width="0.8"/>
<line x1="740.50" y1="250.61" x2="740.50" y2="253.15" stroke="#000" stroke-width="0.8"/>
<rect x="535.00" y="246.00" width="0.90" height="130.00" fill="#404040" />
<rect x="621.30" y="232.00" width="0.90" height="41.00" fill="#0000ff" />
<rect x="621.90" y="272.00" width="1.30" height="104.00" fill="#000" />
<rect x="624.20" y="247.00" width="0.80" height="48.00" fill="#505050" />
<rect x="737.70" y="246.00" width="1.60" height="25.30" fill="#000" />
<polyline points="478.60,363.19 479.60,363.59 480.60,363.17 481.60,363.48 482.60,363.20 483.60,363.18 484.60,363.88 485.60,363.75 486.60,364.14 487.60,363.43 488.60,363.52 489.60,363.54 490.60,362.07 491.60,363.67 492.60,363.05 493.60,363.68 494.60,363.13 495.60,363.50 496.60,364.33 497.60,363.49 498.60,363.43 499.60,363.67 500.60,363.53 501.60,363.25 502.60,362.47 503.60,363.37 504.60,363.74 505.60,363.35 506.60,363.82 507.60,363.66 508.60,363.69 509.60,363.62 510.60,363.64 511.60,363.63 512.60,363.55 513.60,363.35 514.60,363.65 515.60,363.88 516.60,363.69 517.60,363.67 518.60,363.94 519.60,363.42 520.60,363.56 521.60,363.74 522.60,364.11 523.60,363.94 524.60,363.53 525.60,363.28 526.60,363.78 527.60,363.68 528.60,363.31 529.60,363.70 530.60,363.05 531.60,363.27 532.60,363.89 533.60,363.25 534.60,363.46 535.40,363.50 535.60,376.00 621.50,376.00 622.30,363.00 623.00,362.83 624.00,363.50 625.00,363.12 626.00,363.80 627.00,363.42 628.00,363.28 629.00,363.67 630.00,363.44 631.00,363.58 632.00,362.94 633.00,363.16 634.00,362.22 635.00,363.23 636.00,363.23 637.00,363.32 638.00,363.20 639.00,363.25 640.00,363.59 641.00,363.26 642.00,362.13 643.00,363.34 644.00,361.94 645.00,362.81 646.00,362.98 647.00,363.34 648.00,363.52 649.00,363.41 650.00,363.27 651.00,362.99 652.00,363.12 653.00,363.54 654.00,362.99 655.00,363.48 656.00,363.16 657.00,363.16 658.00,363.55 659.00,363.44 660.00,363.27 661.00,363.10 662.00,362.94 663.00,363.44 664.00,363.57 665.00,363.35 666.00,363.23 667.00,363.08 668.00,363.30 669.00,363.33 670.00,363.34 671.00,363.42 672.00,362.91 673.00,363.45 674.00,363.37 675.00,363.50 676.00,363.44 677.00,363.17 678.00,363.45 679.00,363.48 680.00,363.18 681.00,362.82 682.00,363.15 683.00,363.35 684.00,363.14 685.00,363.13 686.00,363.52 687.00,362.08 688.00,363.34 689.00,363.26 690.00,361.97 691.00,363.63 692.00,363.26 693.00,363.31 694.00,363.34 695.00,363.35 696.00,363.10 697.00,363.09 698.00,363.25 699.00,363.18 700.00,363.53 701.00,363.32 702.00,363.27 703.00,363.48 704.00,363.05 705.00,363.08 706.00,363.37 707.00,363.25 708.00,363.45 709.00,363.46 710.00,363.11 711.00,363.48 712.00,363.51 713.00,363.22 714.00,363.24 715.00,362.94 716.00,363.40 717.00,363.72 718.00,362.96 719.00,363.22 720.00,363.41 721.00,363.15 722.00,362.97 723.00,361.99 724.00,363.33 725.00,363.23 726.00,363.12 727.00,363.60 728.00,362.98 729.00,363.27 730.00,363.52 731.00,363.22 732.00,363.34 733.00,363.54 734.00,363.14 735.00,363.11 736.00,363.23 737.00,363.48 738.00,363.40 739.00,363.68 740.00,363.18 741.00,363.24 742.00,363.26 743.00,363.27 744.00,363.01 745.00,363.51 746.00,363.27 747.00,363.23 748.00,363.74 749.00,363.18 750.00,363.45 751.00,363.45 752.00,363.13 753.00,363.33 754.00,363.39 755.00,362.05 756.00,363.35 757.00,363.43 758.00,363.13 759.00,363.52 760.00,363.47 761.00,363.47 762.00,363.09 763.00,363.26 764.00,363.18 765.00,363.28 766.00,363.14 767.00,363.11 768.00,363.39 769.00,363.19 770.00,363.44 771.00,363.20 772.00,363.44 773.00,364.00 774.00,363.32 775.00,363.62 776.00,363.40 777.00,363.12 778.00,361.85 779.00,363.47 780.00,363.12 781.00,362.90 782.00,362.96 783.00,363.29 784.00,363.33 785.00,362.17 786.00,363.07 787.00,363.22 788.00,363.35 789.00,363.42 790.00,363.38 791.00,363.26 792.00,362.97 793.00,363.38 794.00,363.09 795.00,362.08 796.00,363.18 797.00,362.93 798.00,363.29 799.00,363.10 800.00,363.26" fill="none" stroke="#ff0000" stroke-width="1" />
<rect x="478.60" y="375.20" width="56.80" height="1.10" fill="#c000e0" />
<rect x="606.30" y="375.20" width="15.20" height="1.10" fill="#0000ff" />
<rect x="622.00" y="375.20" width="178.30" height="1.10" fill="#c000e0" />
<rect x="8.00" y="424.00" width="818.00" height="1.00" fill="#808080" />
<rect x="8.00" y="449.00" width="819.00" height="1.00" fill="#0000ff" />
<rect x="416.20" y="449.00" width="2.00" height="140.00" fill="#0000ff" />
<rect x="8.00" y="588.00" width="819.00" height="2.00" fill="#0000ff" />
<rect x="8.00" y="620.00" width="819.00" height="1.00" fill="#0000ff" />
<text x="9.30" y="465.20" font-size="16.2" fill="#ffff00" textLength="286.48" lengthAdjust="spacing" stroke="#ffff00" stroke-width="0.15" >Comments (20-Sep-2025 10:41:30)</text>
<text x="121.93" y="486.40" font-size="16.2" fill="#fff" textLength="179.63" lengthAdjust="spacing" stroke="#fff" stroke-width="0.12" >*** STABLE BEAMS ***</text>
<text x="149.89" y="505.50" font-size="16.2" fill="#fff" textLength="125.38" lengthAdjust="spacing" stroke="#fff" stroke-width="0.12" >All IPs on target</text>
<text x="181.84" y="544.20" font-size="16.2" fill="#fff" textLength="60.91" lengthAdjust="spacing" stroke="#fff" stroke-width="0.12" >XRPs IN</text>
<text x="78.95" y="582.20" font-size="16.2" fill="#fff" textLength="265.23" lengthAdjust="spacing" stroke="#fff" stroke-width="0.12" >plan to keep this fill until ~13:30</text>
<text x="14.50" y="608.30" font-size="13.95" fill="#ffff00" textLength="343.79" lengthAdjust="spacing" stroke="#ffff00" stroke-width="0.18" >AFS: 25ns_2460b_2448_2089_2227_144bpi_20inj</text>
<text x="421.24" y="442.50" font-size="14.2" fill="#fff" textLength="170.83" lengthAdjust="spacing" stroke="#fff" stroke-width="0.12" >BIS status and SMP flags</text>
<text x="721.88" y="442.50" font-size="14.2" fill="#fff" textLength="17.75" lengthAdjust="spacing" >B1</text>
<text x="773.79" y="442.50" font-size="14.2" fill="#fff" textLength="17.63" lengthAdjust="spacing" >B2</text>
<text x="458.82" y="466.00" font-size="14.2" fill="#fff" textLength="198.56" lengthAdjust="spacing" stroke="#fff" stroke-width="0.12" >Link Status of Beam Permits</text>
<rect x="703.80" y="453.00" width="46.50" height="16.20" fill="#00ff00" />
<text x="712.02" y="466.00" font-size="14.3" fill="#000" textLength="30.15" lengthAdjust="spacing" stroke="#000" stroke-width="0.3" >true</text>
<rect x="761.00" y="453.00" width="47.20" height="16.20" fill="#00ff00" />
<text x="769.22" y="466.00" font-size="14.3" fill="#000" textLength="30.15" lengthAdjust="spacing" stroke="#000" stroke-width="0.3" >true</text>
<text x="487.31" y="489.00" font-size="14.2" fill="#fff" textLength="140.42" lengthAdjust="spacing" stroke="#fff" stroke-width="0.12" >Global Beam Permit</text>
<rect x="703.80" y="476.12" width="46.50" height="16.20" fill="#00ff00" />
<text x="712.02" y="489.12" font-size="14.3" fill="#000" textLength="30.15" lengthAdjust="spacing" stroke="#000" stroke-width="0.3" >true</text>
<rect x="761.00" y="476.12" width="47.20" height="16.20" fill="#00ff00" />
<text x="769.22" y="489.12" font-size="14.3" fill="#000" textLength="30.15" lengthAdjust="spacing" stroke="#000" stroke-width="0.3" >true</text>
<text x="514.69" y="512.00" font-size="14.2" fill="#fff" textLength="85.89" lengthAdjust="spacing" stroke="#fff" stroke-width="0.12" >Setup Beam</text>
<rect x="703.80" y="499.24" width="46.50" height="16.20" fill="#ff0000" />
<text x="711.50" y="512.24" font-size="14.3" fill="#000" textLength="32.51" lengthAdjust="spacing" stroke="#000" stroke-width="0.3" >false</text>
<rect x="761.00" y="499.24" width="47.20" height="16.20" fill="#ff0000" />
<text x="768.70" y="512.24" font-size="14.3" fill="#000" textLength="32.51" lengthAdjust="spacing" stroke="#000" stroke-width="0.3" >false</text>
<text x="504.03" y="535.00" font-size="14.2" fill="#fff" textLength="108.30" lengthAdjust="spacing" stroke="#fff" stroke-width="0.12" >Beam Presence</text>
<rect x="703.80" y="522.36" width="46.50" height="16.20" fill="#00ff00" />
<text x="712.02" y="535.36" font-size="14.3" fill="#000" textLength="30.15" lengthAdjust="spacing" stroke="#000" stroke-width="0.3" >true</text>
<rect x="761.00" y="522.36" width="47.20" height="16.20" fill="#00ff00" />
<text x="769.22" y="535.36" font-size="14.3" fill="#000" textLength="30.15" lengthAdjust="spacing" stroke="#000" stroke-width="0.3" >true</text>
<text x="453.60" y="558.00" font-size="14.2" fill="#fff" textLength="208.22" lengthAdjust="spacing" stroke="#fff" stroke-width="0.12" >Moveable Devices Allowed In</text>
<rect x="703.80" y="545.48" width="46.50" height="16.20" fill="#00ff00" />
<text x="712.02" y="558.48" font-size="14.3" fill="#000" textLength="30.15" lengthAdjust="spacing" stroke="#000" stroke-width="0.3" >true</text>
<rect x="761.00" y="545.48" width="47.20" height="16.20" fill="#00ff00" />
<text x="769.22" y="558.48" font-size="14.3" fill="#000" textLength="30.15" lengthAdjust="spacing" stroke="#000" stroke-width="0.3" >true</text>
<text x="510.30" y="581.00" font-size="14.2" fill="#fff" textLength="95.05" lengthAdjust="spacing" stroke="#fff" stroke-width="0.12" >Stable Beams</text>
<rect x="703.80" y="568.60" width="46.50" height="16.20" fill="#00ff00" />
<text x="712.02" y="581.60" font-size="14.3" fill="#000" textLength="30.15" lengthAdjust="spacing" stroke="#000" stroke-width="0.3" >true</text>
<rect x="761.00" y="568.60" width="47.20" height="16.20" fill="#00ff00" />
<text x="769.22" y="581.60" font-size="14.3" fill="#000" textLength="30.15" lengthAdjust="spacing" stroke="#000" stroke-width="0.3" >true</text>
<text x="422.72" y="609.70" font-size="14.2" fill="#fff" textLength="92.77" lengthAdjust="spacing" stroke="#fff" stroke-width="0.12" >PM Status B1</text>
<text x="626.44" y="609.70" font-size="14.2" fill="#fff" textLength="91.95" lengthAdjust="spacing" stroke="#fff" stroke-width="0.12" >PM Status B2</text>
<rect x="519.20" y="593.00" width="93.80" height="26.20" fill="#00ff00" />
<rect x="723.00" y="593.00" width="100.40" height="26.20" fill="#00ff00" />
<text x="532.62" y="610.30" font-size="14.2" fill="#000" textLength="66.41" lengthAdjust="spacing" stroke="#000" stroke-width="0.15" >ENABLED</text>
<text x="739.52" y="610.30" font-size="14.2" fill="#000" textLength="66.41" lengthAdjust="spacing" stroke="#000" stroke-width="0.15" >ENABLED</text>
</svg>
</body></html>
